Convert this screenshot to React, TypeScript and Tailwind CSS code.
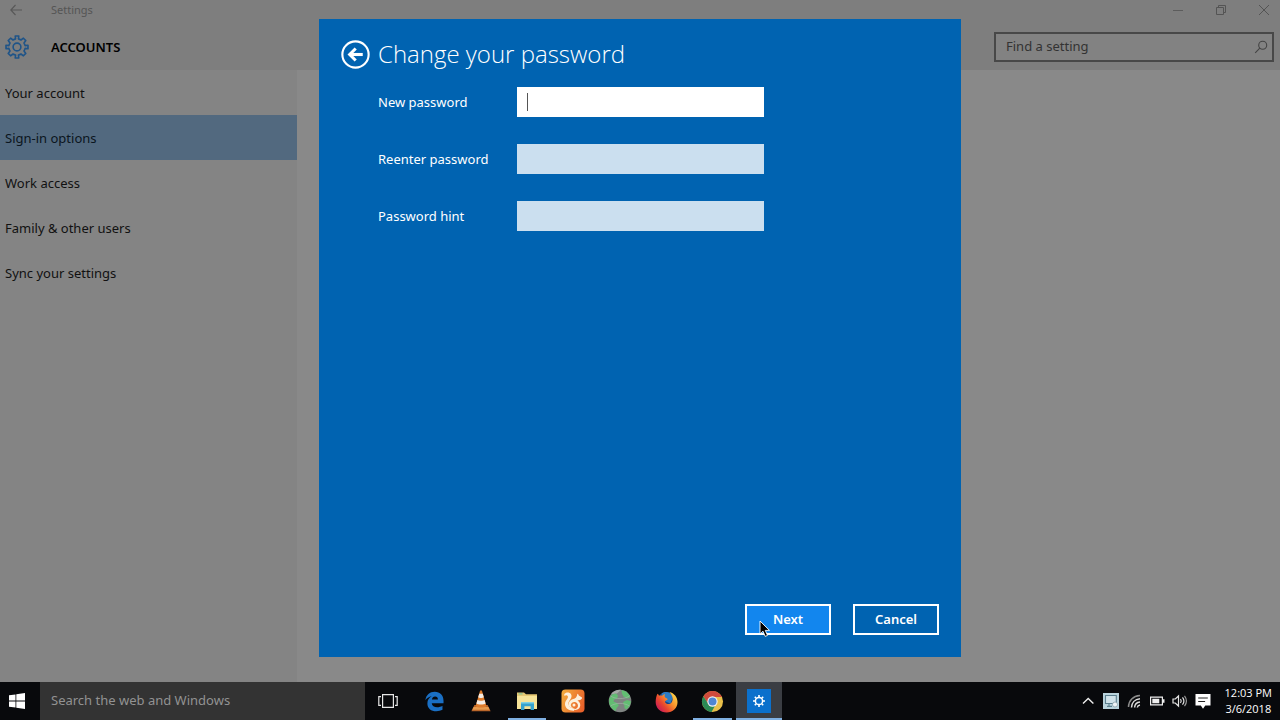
import type { ReactNode } from "react";

const navItems = [
  "Your account",
  "Sign-in options",
  "Work access",
  "Family & other users",
  "Sync your settings",
];

const fields = [
  { id: "new-password", label: "New password", type: "password" },
  { id: "reenter-password", label: "Reenter password", type: "password" },
  { id: "password-hint", label: "Password hint", type: "text" },
];

function GearIcon() {
  return (
    <svg viewBox="0 0 24 24" className="size-6" fill="none" stroke="#1f5488" strokeWidth="1.600" strokeLinejoin="round">
      <path d="M10.200 1l.4 2.900a8.200 8.200 0 0 0-2.600 1.100L5.600 3.200 3.200 5.600 5 8a8.200 8.200 0 0 0-1.100 2.600L1 10.200v3.600l2.900-.4A8.200 8.200 0 0 0 5 16l-1.800 2.400 2.400 2.400L8 19a8.200 8.200 0 0 0 2.600 1.100l-.4 2.900h3.600l-.4-2.900A8.200 8.200 0 0 0 16 19l2.400 1.800 2.400-2.400L19 16a8.200 8.200 0 0 0 1.100-2.600l2.900.4v-3.600l-2.900.4A8.200 8.200 0 0 0 19 8l1.800-2.400-2.400-2.400L16 5a8.200 8.200 0 0 0-2.600-1.100l.4-2.900z" />
      <circle cx="12" cy="12" r="3.900" />
    </svg>
  );
}

function EdgeIcon() {
  return (
    <svg viewBox="0 0 20 22" className="h-[21px] w-[19px]">
      <path
        fill="#1a6fc4"
        d="M.4 9.600C1.200 4 5 .8 10.300.8c5.600 0 9.200 3.900 9.200 9.400v2.600H7.100c.2 2.900 2.700 4.200 5.700 4.200 2.100 0 4-.6 5.600-1.600v4.400c-1.800 1-4 1.500-6.400 1.500-5.700 0-9.500-3.300-9.500-8.300 0-3.200 1.600-5.900 4.600-7.400C4 6.200 1.900 7.600.4 9.600zm6.900-.6h6.300c0-2.100-1-3.300-3-3.300-1.800 0-3 1.200-3.300 3.300z"
      />
    </svg>
  );
}

function VlcIcon() {
  return (
    <svg viewBox="0 0 20 22" className="h-[22px] w-5">
      <path fill="#b9662a" d="M3.400 15h13.200l3 6.200H.4z" />
      <path fill="#e69a4c" d="M2.600 17h14.800l1.300 2.800H1.300z" />
      <path fill="#dd7b2c" d="M9.100.6h1.800L15.400 16c-1.500 2-9.300 2-10.800 0z" />
      <path fill="#f3ece4" d="M8.200 3.800h3.600l1 3.500c-1 .9-4.600.9-5.600 0zM6.400 10c1.500 1.100 5.700 1.100 7.200 0l1 3.400c-1.600 1.500-7.600 1.500-9.200 0z" />
    </svg>
  );
}

function ExplorerIcon() {
  return (
    <svg viewBox="0 0 22 20" className="h-5 w-[22px]">
      <path fill="#e5c873" d="M1 1.500h7l2 1.800h11V18H1z" />
      <path fill="#f6e398" d="M1 5h20v13H1z" />
      <path fill="#6ac2a0" d="M2.500 2.400h4v1h-4z" />
      <path fill="#36a3cf" d="M5 11h13v8h-3.400v-3.800H8.400V19H5z" />
      <path fill="#7fd0e2" d="M5 11h13v1.500H5z" />
    </svg>
  );
}

function UcIcon() {
  return (
    <svg viewBox="0 0 24 24" className="size-6">
      <defs>
        <linearGradient id="uc" x1="0" y1="0.300" x2="1" y2="0.700">
          <stop offset="0" stopColor="#f3a83c" />
          <stop offset="1" stopColor="#e9602a" />
        </linearGradient>
      </defs>
      <rect x="0.500" y="0.500" width="23" height="23" rx="4" fill="url(#uc)" />
      <path
        fill="#fdf0dc"
        d="M3.200 5.300C4.700 3 8.300 2.800 9.900 5c1.300 1.900.5 4-1 5.900-1 1.300-1.700 2.500-1.500 4.200.4 2.900 3.300 4.600 6.200 4.300l-.6 2.300C8.400 22 4.300 19.500 4 15.500c-.2-2.600 1.200-4.200 2.300-5.800.9-1.300.9-2.700-.3-3.200-.9-.4-1.900.1-2.500.6z"
      />
      <path
        fill="#fdf0dc"
        d="M9.500 11.500c1.700-1.600 4-1.400 5.500-3 .9-1 1.100-2.500 1.400-3.700.9.200 1.300.9 1.400 1.700l3.200 2c.3 1.300-.9 2.200-2.300 2.500-.8.200-1.700.2-2.300.6 2.600 1.500 3.600 4.200 2.400 6.700-1.300 2.700-4.800 3.500-7.300 2.100 2.200.2 4.600-.7 5.300-2.700.8-2.400-1-4.700-3.500-4.700-2 0-3.500 1.400-3.500 3.100 0 1.500 1.200 2.400 2.500 2.300-2.500.8-4.600-.6-4.700-3-.1-1.600.7-2.800 1.900-3.900z"
      />
      <circle cx="13" cy="16" r="1.500" fill="#fdf0dc" />
    </svg>
  );
}

function GlobeIcon() {
  return (
    <svg viewBox="0 0 24 24" className="size-6">
      <circle cx="12" cy="12" r="11.300" fill="#7f8482" />
      <path fill="#a4aaa6" d="M12 .7A11.300 11.300 0 0 0 3 5.200l6-.8 4-3.600z" />
      <path
        fill="#62bd72"
        d="M1.200 9.500 4 5.500l4-1 2 2-.6 2.700-3 1-1 2.400 4 1.600 1.400 2.400-2.200 2.500-1 3c-3-1.300-5.500-4-6.400-7.500zM13.500 1l5 1.700 3.500 4-.5 2.300-3 .6-3-2-1.500-3zM16 12.500l3-1.500 3.900 1.300-1 4.200-3.200 3.800-2.200-1-.2-3.200-1.500-2z"
      />
      <path fill="none" stroke="#a9b5ac" strokeWidth="0.600" d="M2.500 7C8 10.500 16 10.500 21.500 7M2.500 17c5.500-3.500 13.500-3.500 19 0" />
    </svg>
  );
}

function FirefoxIcon() {
  return (
    <svg viewBox="0 0 24 24" className="size-[23px]">
      <defs>
        <linearGradient id="fox" x1="0.950" y1="0.150" x2="0.150" y2="0.800">
          <stop offset="0" stopColor="#ffd84a" />
          <stop offset="0.400" stopColor="#f9932c" />
          <stop offset="0.750" stopColor="#e8452f" />
          <stop offset="1" stopColor="#cf2450" />
        </linearGradient>
      </defs>
      <circle cx="12" cy="11.500" r="9.500" fill="#1c4484" />
      <path fill="#2b7bc4" d="M7 3.500C11 .5 17 2 19 7l-3 7-5-2-4-4z" />
      <path
        fill="url(#fox)"
        d="M2.600 4c.8.400 1.300 1.200 1.600 2 1-.5 2.200-.5 3.300 0 .8-.9 1.800-1.600 3-1.900-.7 1.300-.7 2.700.2 3.700.8.900 2 .9 2.700 1.600-.5 1.300-2.600 1.400-3.100 2.900 1.300 3.300 5.400 3 7.200.4 2-3.200.6-7.700-2.600-10.700 5.200 1.200 8.500 5.300 8.600 10.500.1 6.200-5 11-11.300 11C5.500 23.500.7 18.600.7 12.500c0-3.200.7-6.200 1.900-8.500z"
      />
    </svg>
  );
}

function ChromeIcon() {
  return (
    <svg viewBox="0 0 24 24" className="size-[23px]">
      <circle cx="12" cy="12" r="11" fill="#e9c04a" />
      <path fill="#cf4a3c" d="M2.500 6.500a11 11 0 0 1 19 0L22 7.300H12L7.500 14.400z" />
      <path fill="#2b8a55" d="M2.500 6.500 7.700 14.500 12 17l2.800-.8L11 23A11 11 0 0 1 2.500 6.500z" />
      <circle cx="12" cy="12" r="5.400" fill="#f4f4f4" />
      <circle cx="12" cy="12" r="4.200" fill="#4f86d2" />
    </svg>
  );
}

function SettingsTile() {
  return (
    <span className="flex size-6 items-center justify-center bg-[#0b70cc]">
      <svg viewBox="0 0 14 14" className="size-[14px]" fill="none" stroke="#fff">
        <circle cx="7" cy="7" r="3.600" strokeWidth="1.500" />
        <path strokeWidth="1.600" d="M7 1v2M7 11v2M1 7h2M11 7h2M2.800 2.800l1.400 1.400M9.800 9.800l1.400 1.400M11.200 2.800 9.800 4.200M4.200 9.800l-1.400 1.400" />
      </svg>
    </span>
  );
}

function TaskViewIcon() {
  return (
    <svg viewBox="0 0 20 14" className="h-[14px] w-5" fill="none" stroke="#e6e6e6" strokeWidth="1.200">
      <path d="M4.600.7h10.800v12.600H4.600zM3 2.600H.8v8.800H3M17 2.600h2.200v8.800H17" />
    </svg>
  );
}

const apps: { name: string; icon: ReactNode; open?: boolean; active?: boolean }[] = [
  { name: "Task View", icon: <TaskViewIcon /> },
  { name: "Microsoft Edge", icon: <EdgeIcon /> },
  { name: "VLC media player", icon: <VlcIcon /> },
  { name: "File Explorer", icon: <ExplorerIcon />, open: true },
  { name: "UC Browser", icon: <UcIcon /> },
  { name: "Internet", icon: <GlobeIcon /> },
  { name: "Firefox", icon: <FirefoxIcon /> },
  { name: "Google Chrome", icon: <ChromeIcon />, open: true },
  { name: "Settings", icon: <SettingsTile />, active: true },
];

const tray: { name: string; icon: ReactNode }[] = [
  {
    name: "Show hidden icons",
    icon: (
      <svg viewBox="0 0 16 16" className="size-4" fill="none" stroke="#eee" strokeWidth="1.400">
        <path d="m3 10.500 5.200-5 5.200 5" />
      </svg>
    ),
  },
  {
    name: "Display",
    icon: (
      <svg viewBox="0 0 16 16" className="size-4">
        <path fill="#b9d3dc" d="M0 0h16v16H0z" />
        <path fill="#d0e3ea" stroke="#5b7f8e" strokeWidth="1.100" d="M2.500 2.500h10.800v8H2.500zM6 10.500v2.700M4 13.400h5" />
        <circle cx="12" cy="11.500" r="2.500" fill="#eef4f6" stroke="#8199a5" strokeWidth="0.700" />
      </svg>
    ),
  },
  {
    name: "Network",
    icon: (
      <svg viewBox="0 0 16 16" className="size-4" fill="none" stroke="#ddd" strokeWidth="1.500">
        <path stroke="#8c8c8c" d="M2.500 14C2.700 7.500 7 3 14 2.600" />
        <path d="M5.500 14.500c.2-4.800 3.400-8.300 8.500-8.700M8.600 14.500c.2-3 2.200-5.200 5.400-5.500M11.300 14.500c.2-1.400 1.200-2.300 2.700-2.500" />
      </svg>
    ),
  },
  {
    name: "Battery",
    icon: (
      <svg viewBox="0 0 16 16" className="size-4">
        <path fill="none" stroke="#eee" strokeWidth="1.200" d="M1.600 4.100h11.800v7.800H1.600z" />
        <path fill="#eee" d="M3.300 5.800h7v4.400h-7zM14 6.300h1.500v3.400H14z" />
      </svg>
    ),
  },
  {
    name: "Volume",
    icon: (
      <svg viewBox="0 0 16 16" className="size-4" fill="none" stroke="#e4e4e4" strokeWidth="1.200">
        <path d="M1 6h2.300l3.200-3v10l-3.200-3H1zM8.500 6c.9 1.200.9 2.800 0 4M10.500 4.300c1.700 2.200 1.700 5.200 0 7.400" />
        <path stroke="#999" d="M12.500 2.800c2.400 3.200 2.400 7.200 0 10.400" />
      </svg>
    ),
  },
  {
    name: "Notifications",
    icon: (
      <svg viewBox="0 0 16 16" className="size-4">
        <path fill="#fff" d="M.5 1h15v11.500h-5.200L8 15.800l-2.200-3.300H.5z" />
        <path stroke="#222" strokeWidth="1.200" d="M3.200 5h9.600M3.200 8.500h6.900" />
      </svg>
    ),
  },
];

function SettingsWindow() {
  return (
    <div className="flex flex-1 flex-col bg-[#898989]">
      <div className="flex h-[19px] items-center justify-between bg-[#7e7e7e] text-[#555]">
        <div className="flex items-center">
          <button aria-label="Back" className="flex w-[51px] pl-[10px]">
            <svg viewBox="0 0 12 12" className="size-3" fill="none" stroke="#575757" strokeWidth="1.100">
              <path d="M12 6H1M5.500 1 .8 6l4.700 5" />
            </svg>
          </button>
          <span className="text-[11px] leading-4">Settings</span>
        </div>
        <div className="flex gap-[31px] pr-[10px]">
          <button aria-label="Minimize">
            <svg viewBox="0 0 12 12" className="size-3" stroke="#5c5c5c">
              <path d="M1 6.500h10" />
            </svg>
          </button>
          <button aria-label="Restore">
            <svg viewBox="0 0 12 12" className="size-3" fill="none" stroke="#545454">
              <path d="M1.500 3.500h7v7h-7zM3.500 3.500v-2h7v7h-2" />
            </svg>
          </button>
          <button aria-label="Close">
            <svg viewBox="0 0 12 12" className="size-3" stroke="#545454">
              <path d="m1 1 10 10M11 1 1 11" />
            </svg>
          </button>
        </div>
      </div>

      <header className="flex h-[51px] items-start justify-between bg-[#7e7e7e] pr-[6px]">
        <div className="flex items-center gap-[22px] pt-4 pl-[5px]">
          <GearIcon />
          <h1 className="text-[13px] leading-6 font-semibold text-black">ACCOUNTS</h1>
        </div>
        <div className="mt-[13px] flex h-[30px] w-[280px] items-center border-2 border-[#484848] bg-[#828282] pr-1 pl-[10px]">
          <input
            type="search"
            aria-label="Find a setting"
            placeholder="Find a setting"
            className="min-w-0 flex-1 bg-transparent text-[13px] text-black outline-none placeholder:text-[#333]"
          />
          <svg viewBox="0 0 14 14" className="size-[14px]" fill="none" stroke="#444" strokeWidth="1.100">
            <circle cx="8.700" cy="5.300" r="4" />
            <path d="M5.800 8.200 1.200 12.800" />
          </svg>
        </div>
      </header>

      <nav className="w-[297px] flex-1 bg-[#848484]">
        <ul>
          {navItems.map((item) => (
            <li key={item}>
              <a
                href="#"
                className={
                  item === "Sign-in options"
                    ? "flex h-[45px] items-center bg-[#52697f] px-[5px] pt-[2px] text-[13px] text-[#0b1520]"
                    : "flex h-[45px] items-center px-[5px] pt-[2px] text-[13px] text-[#111]"
                }
              >
                {item}
              </a>
            </li>
          ))}
        </ul>
      </nav>
    </div>
  );
}

function PasswordDialog() {
  return (
    <form
      role="dialog"
      aria-labelledby="dialog-title"
      onSubmit={(e) => e.preventDefault()}
      className="flex w-[642px] flex-col bg-[#0063b1] px-[22px] pt-[17px] pb-[22px] text-white"
    >
      <div className="flex h-9 items-center gap-2">
        <button type="button" aria-label="Back">
          <svg viewBox="0 0 30 30" className="size-[29px]" fill="none" stroke="#fff">
            <circle cx="15" cy="15" r="13.600" strokeWidth="2.200" />
            <path strokeWidth="3.200" d="M22.500 15H9" />
            <path strokeWidth="3.200" d="m15.200 8.800-6.200 6.200 6.200 6.200" />
          </svg>
        </button>
        <h2 id="dialog-title" className="font-['Open_Sans','Noto_Sans',sans-serif] text-2xl font-light">
          Change your password
        </h2>
      </div>
      <div className="flex flex-1 flex-col gap-[27px] pt-[15px] pl-[37px]">
        {fields.map((field, i) => (
          <div key={field.id} className="flex items-center">
            <label htmlFor={field.id} className="w-[139px] text-[13px] leading-5">
              {field.label}
            </label>
            <div className="relative flex">
              <input
                id={field.id}
                type={field.type}
                className={
                  i === 0
                    ? "h-[30px] w-[247px] bg-white px-[10px] text-black caret-transparent outline-none"
                    : "h-[30px] w-[247px] bg-[#cbdfef] px-[10px] text-black outline-none"
                }
              />
              {i === 0 && <span className="absolute top-[6px] left-[10px] h-[18px] w-px bg-[#555]" />}
            </div>
          </div>
        ))}
      </div>
      <div className="flex justify-end gap-[22px]">
        <button className="relative h-[31px] w-[86px] border-2 border-white bg-[#1286ee] text-[13px] font-semibold">
          Next
          <svg viewBox="0 0 12 18" className="absolute top-[14px] left-3 h-[18px] w-3">
            <path fill="#000" stroke="#fff" strokeWidth="0.900" d="M1 1v13l3-2.800 2.200 5.200 2.300-1-2.200-5h4.200z" />
          </svg>
        </button>
        <button type="button" className="h-[31px] w-[86px] border-2 border-white bg-[#0063b1] text-[13px] font-semibold">
          Cancel
        </button>
      </div>
    </form>
  );
}

function Taskbar() {
  return (
    <footer className="flex h-[38px] justify-between bg-[#08090c]">
      <div className="flex">
        <button aria-label="Start" className="flex w-10 items-center pl-[9px]">
          <svg viewBox="0 0 16 16" className="size-4" fill="#fff">
            <path d="M0 2.300 6.500 1.400v6.200H0zM7.300 1.300 16 0v7.600H7.300zM0 8.400h6.500v6.200L0 13.700zM7.300 8.400H16V16l-8.700-1.300z" />
          </svg>
        </button>
        <input
          type="search"
          aria-label="Search the web and Windows"
          placeholder="Search the web and Windows"
          className="w-[325px] bg-[#333] px-[11px] text-[13px] text-white outline-none placeholder:text-[#929292]"
        />
        <div className="grid w-[417px] grid-cols-9">
          {apps.map((app) => (
            <button
              key={app.name}
              aria-label={app.name}
              className={
                app.active
                  ? "relative flex items-center justify-center bg-[#3a3d43]"
                  : "relative flex items-center justify-center"
              }
            >
              {app.icon}
              {app.open && <span className="absolute inset-x-1 bottom-0 h-[2px] bg-[#7fb0e2]" />}
              {app.active && <span className="absolute inset-x-0 bottom-0 h-[2px] bg-[#7fb0e2]" />}
            </button>
          ))}
        </div>
      </div>
      <div className="flex items-center gap-[14px] pr-2">
        <div className="flex gap-[7px]">
          {tray.map((item) => (
            <button key={item.name} aria-label={item.name}>
              {item.icon}
            </button>
          ))}
        </div>
        <time className="text-center font-['Open_Sans','Noto_Sans',sans-serif] text-[11px] leading-4 text-white">
          12:03 PM
          <br />
          3/6/2018
        </time>
      </div>
    </footer>
  );
}

export default function App() {
  return (
    <div className="flex min-h-screen flex-col font-['Noto_Sans','Open_Sans',sans-serif]">
      <main className="relative flex flex-1 flex-col">
        <SettingsWindow />
        <div className="absolute inset-0 flex justify-center pt-[19px] pb-[25px]">
          <PasswordDialog />
        </div>
      </main>
      <Taskbar />
    </div>
  );
}
